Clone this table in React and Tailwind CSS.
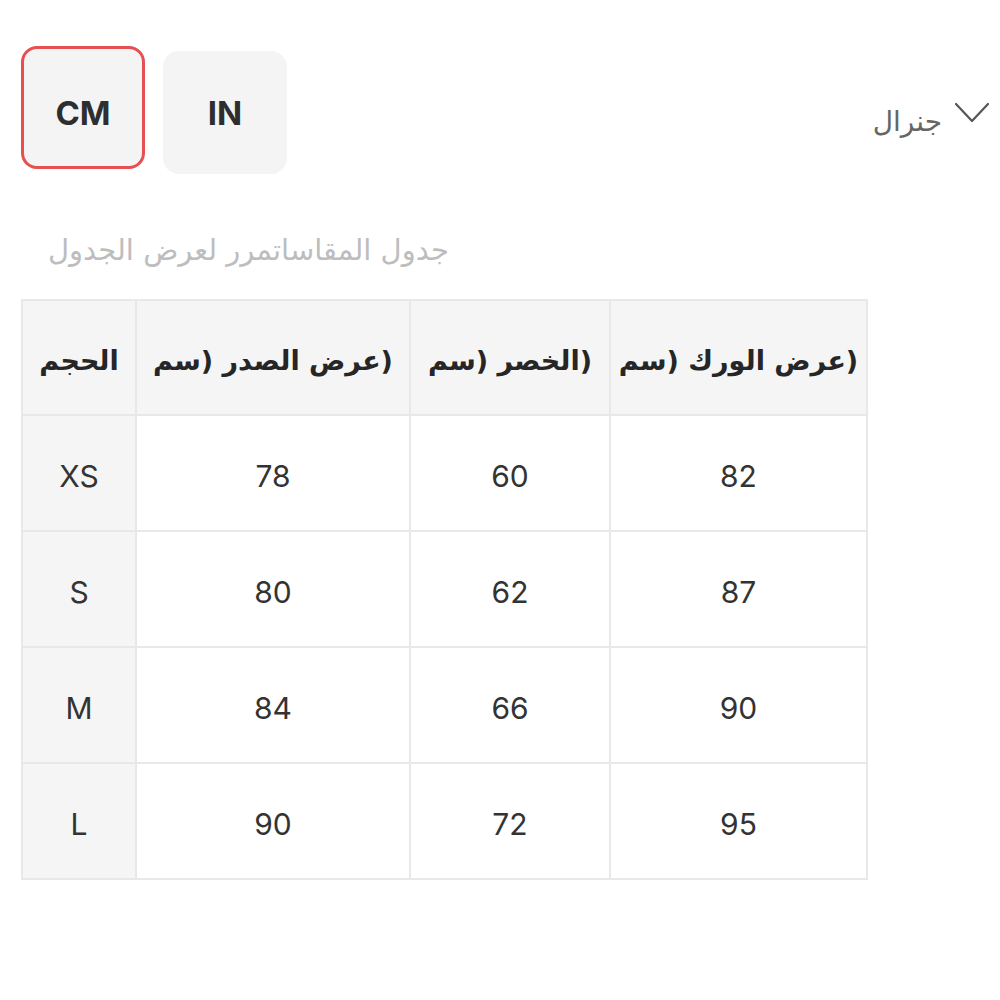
import React, { useState } from 'react';

const latin = { fontFamily: 'Inter, "Liberation Sans", sans-serif' };
const arabic = { fontFamily: '"DejaVu Sans", "Noto Sans", sans-serif' };

const headers = ['الحجم', '(عرض الصدر (سم', '(الخصر (سم', '(عرض الورك (سم'];

const rows = [
  ['XS', '78', '60', '82'],
  ['S', '80', '62', '87'],
  ['M', '84', '66', '90'],
  ['L', '90', '72', '95'],
];

export default function App() {
  const [unit, setUnit] = useState('CM');

  return (
    <div className="w-[1000px] h-[1000px] bg-white">
      {/* Top bar: unit switch + dropdown */}
      <div className="flex justify-between items-start pl-[21px] pr-[10px] pt-[46px]">
        <div className="flex items-start gap-[18px]">
          {['CM', 'IN'].map(u => (
            <button
              key={u}
              onClick={() => setUnit(u)}
              style={latin}
              className={`w-[124px] h-[123px] rounded-[16px] bg-[#f4f4f4] flex items-center justify-center text-[33px] font-bold text-[#2e2e2e] ${unit === u ? 'border-[3px] border-[#e84f50] pt-[12px]' : 'mt-[5px] pt-[3px]'}`}
            >
              {u}
            </button>
          ))}
        </div>

        <div className="flex items-center gap-[12px] mt-[62px]">
          <span dir="rtl" style={arabic} className="text-[28px] text-[#666] leading-none">جنرال</span>
          <svg width="36" height="24" viewBox="0 0 36 24" className="-mt-[18px]">
            <path d="M2 3 L18 20 L34 3" fill="none" stroke="#555" strokeWidth="2.2" strokeLinecap="round" strokeLinejoin="round" />
          </svg>
        </div>
      </div>

      {/* Caption */}
      <div className="pl-[48px] mt-[62px]">
        <p dir="rtl" style={arabic} className="inline-block text-[29px] text-[#bdbdbd] leading-none">
          جدول المقاساتمرر لعرض الجدول
        </p>
      </div>

      {/* Size table */}
      <div className="ml-[21px] mt-[33px] w-[847px] bg-[#e8e8e8] p-[2px] grid grid-cols-[112px_272px_198px_255px] gap-[2px]">
        {headers.map(h => (
          <div
            key={h}
            dir="rtl"
            style={arabic}
            className="h-[113px] pt-[7px] bg-[#f5f5f5] flex items-center justify-center text-[27px] font-bold text-[#262626] whitespace-nowrap"
          >
            {h}
          </div>
        ))}
        {rows.map(row =>
          row.map((cell, i) => (
            <div
              key={row[0] + i}
              style={latin}
              className={`h-[114px] pt-[7px] flex items-center justify-center text-[30px] text-[#333] ${i === 0 ? 'bg-[#f5f5f5]' : 'bg-white'}`}
            >
              {cell}
            </div>
          ))
        )}
      </div>
    </div>
  );
}
